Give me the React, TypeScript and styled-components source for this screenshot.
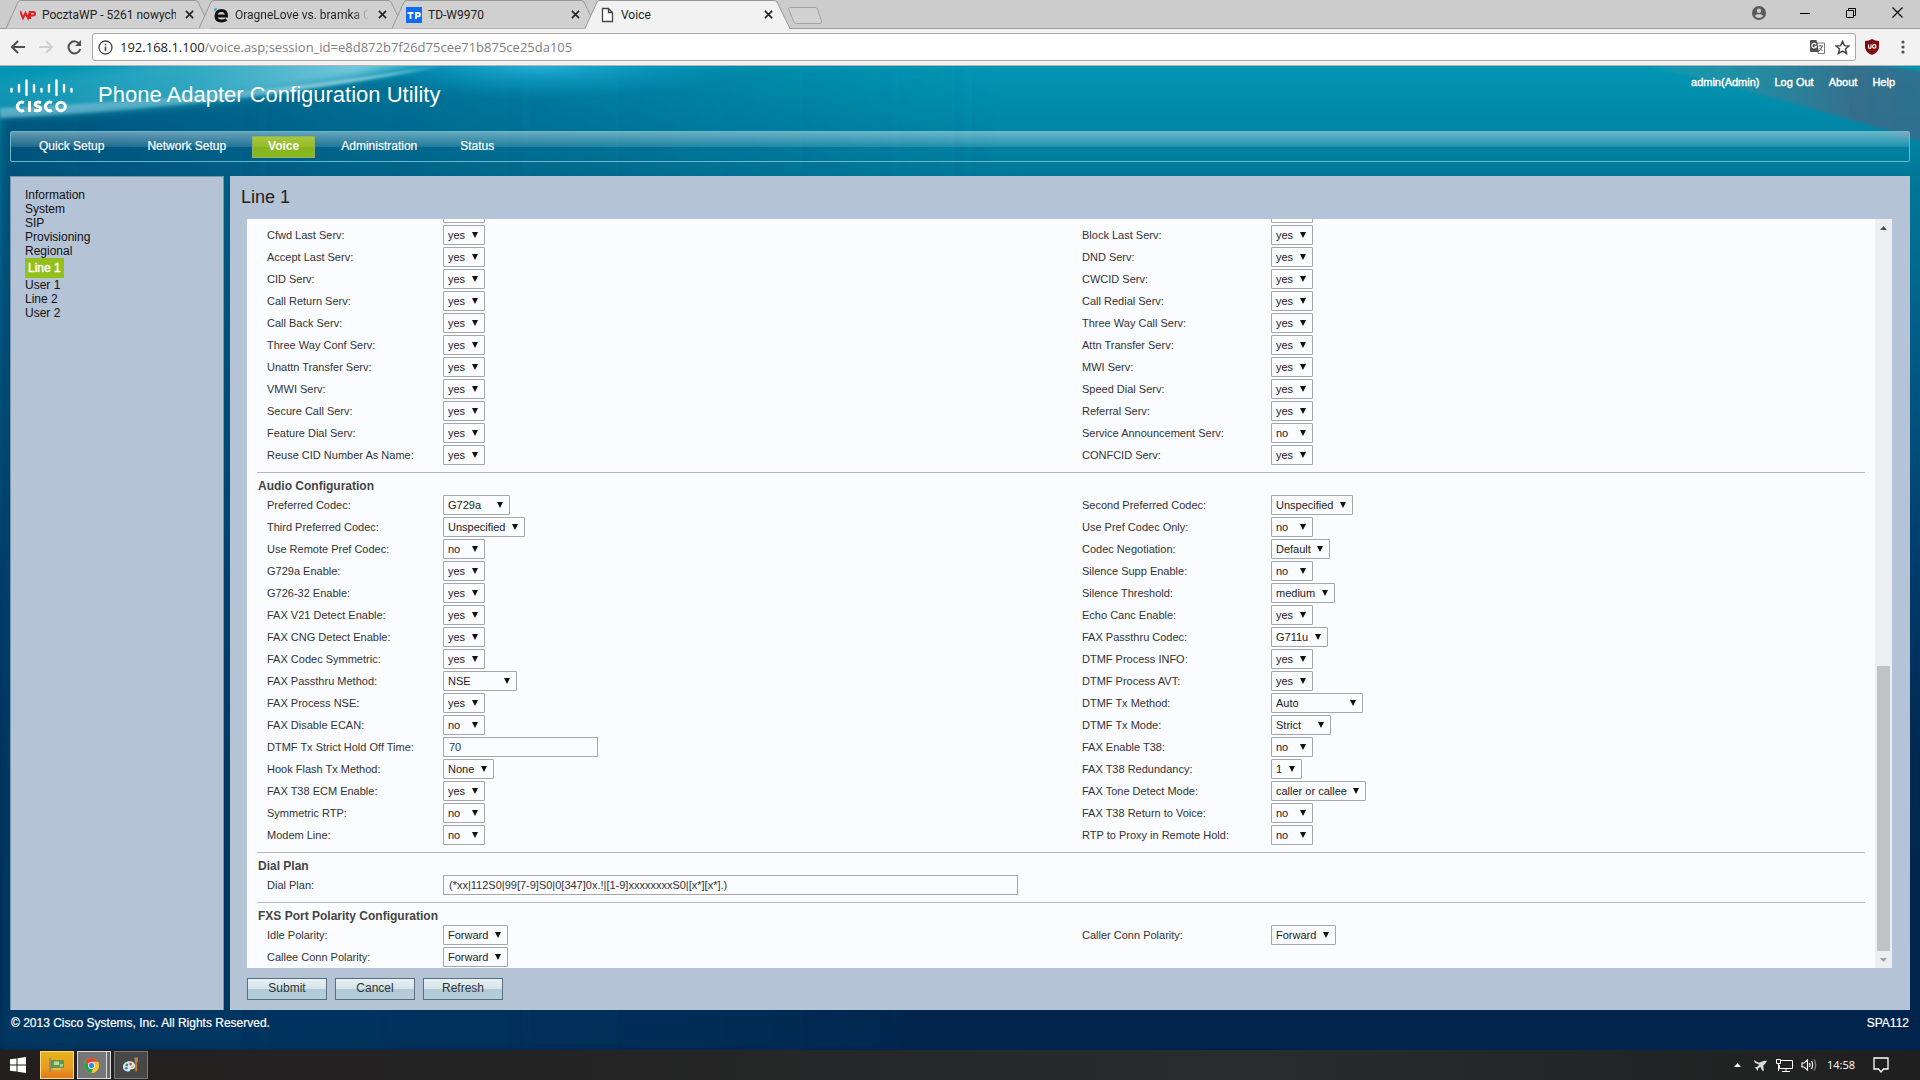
import React, { useId } from "react";
import styled, { createGlobalStyle, css } from "styled-components";

const arial = `"Liberation Sans", Arial, sans-serif`;
const segoe = `"Open Sans", "Noto Sans", sans-serif`;

const GlobalStyle = createGlobalStyle`
  *, *::before, *::after { box-sizing: border-box; }
  body { margin: 0; font-family: ${arial}; font-size: 12px; overflow: hidden; }
  button, input, select { font-family: inherit; margin: 0; }
  a { color: inherit; text-decoration: none; }
`;

const Screen = styled.div`
  display: flex;
  flex-direction: column;
  height: 100vh;
`;

/* ---------- Browser ---------- */
const TabStrip = styled.div`
  display: flex;
  height: 29px;
  padding-left: 6px;
  background: #cccccc;
  border-bottom: 1px solid #9d9d9f;
`;

const TabBox = styled.div<{ $active?: boolean }>`
  position: relative;
  display: flex;
  align-items: center;
  flex: 0 0 205px;
  width: 205px;
  min-width: 0;
  height: 29px;
  margin-right: -12px;
  padding: 0 17px 0 14px;
  z-index: ${(p) => (p.$active ? 2 : 1)};
`;

const TabShape = styled.svg`
  position: absolute;
  inset: 0;
  width: 100%;
  height: 100%;
  z-index: -1;
`;

const TabIcon = styled.span`
  display: flex;
  width: 16px;
  height: 16px;
  margin-right: 6px;
`;

const TabTitle = styled.span<{ $fade?: boolean }>`
  flex: 1;
  min-width: 0;
  margin-right: 8px;
  overflow: hidden;
  white-space: nowrap;
  font-family: Roboto, sans-serif;
  font-size: 12px;
  line-height: 16px;
  color: #222;
  ${(p) =>
    p.$fade &&
    css`
      color: transparent;
      background: linear-gradient(90deg, #222 88%, transparent 100%);
      background-clip: text;
      -webkit-background-clip: text;
    `}
`;

const IconButton = styled.button<{ $w?: number }>`
  display: flex;
  align-items: center;
  justify-content: center;
  flex: none;
  width: ${(p) => p.$w ?? 16}px;
  height: 16px;
  padding: 0;
  border: 0;
  background: none;
  color: #333;
`;

const NewTab = styled(IconButton)`
  width: 36px;
  height: 28px;
  margin-left: 9px;
`;

const WindowButtons = styled.div`
  display: flex;
  align-items: center;
  gap: 30px;
  margin-left: auto;
  padding: 0 15px 3px 0;
`;

const Toolbar = styled.div`
  display: flex;
  align-items: center;
  height: 37px;
  padding: 0 9px 0 9px;
  background: #f2f2f2;
  border-bottom: 1px solid #b4b4b4;
`;

const NavButtons = styled.div`
  display: flex;
  gap: 10px;
  margin-right: 9px;
`;

const Omnibox = styled.label`
  display: flex;
  align-items: center;
  flex: 1;
  height: 28px;
  padding: 0 5px;
  background: #fff;
  border: 1px solid #a8a8a8;
  border-radius: 3px;
  font-family: ${segoe};
`;

const UrlText = styled.span`
  flex: 1;
  padding-left: 7px;
  font-size: 13px;
  line-height: 20px;
  color: #808080;
`;

const UrlHost = styled.span`
  color: #222;
`;

const OmniIcons = styled.span`
  display: flex;
  gap: 10px;
`;

const Extensions = styled.div`
  display: flex;
  align-items: center;
  gap: 15px;
  margin-left: 8px;
`;

/* ---------- Cisco page ---------- */
const Page = styled.div`
  position: relative;
  isolation: isolate;
  display: flex;
  flex-direction: column;
  flex: 1;
  min-height: 0;
  padding: 0 10px;
  background: linear-gradient(180deg, #0097b4 0, #0086a6 60px, #007898 112px, #005f88 260px, #003a68 520px, #002850 700px, #00244c 100%);
`;

const Sky = styled.svg`
  position: absolute;
  inset: 0;
  width: 100%;
  height: 100%;
  z-index: -1;
`;

const Header = styled.header`
  display: flex;
  justify-content: space-between;
  height: 65px;
`;

const Brand = styled.div`
  display: flex;
  align-items: flex-start;
  gap: 25px;
  padding-top: 13px;
`;

const AppTitle = styled.h1`
  margin: 3px 0 0;
  font-size: 22px;
  line-height: 26px;
  font-weight: 400;
  color: #fff;
`;

const UserLinks = styled.nav`
  display: flex;
  gap: 15px;
  padding: 9px 15px 0 0;
  font-size: 11px;
  line-height: 14px;
  color: #fff;
  -webkit-text-stroke: 0.4px #fff;
`;

const MainNav = styled.nav`
  display: flex;
  align-items: center;
  flex: none;
  height: 31px;
  padding-left: 14px;
  border: 1px solid #69b9cc;
  border-radius: 2px;
  background: linear-gradient(180deg, rgba(255, 255, 255, 0.4) 0, rgba(255, 255, 255, 0.12) 15px, transparent 15px);
`;

const NavLink = styled.a<{ $active?: boolean }>`
  margin-right: 15px;
  padding: 0 13px 2px;
  font-size: 12px;
  line-height: 18px;
  color: #fff;
  border: 1px solid transparent;
  ${(p) =>
    p.$active
      ? css`
          margin: 0 12px 0 -3px;
          padding: 0 15px 2px;
          font-weight: 700;
          border-color: #8fb06a;
          background: linear-gradient(180deg, #a6c73c 0, #94bc2a 50%, #86b41c 50%, #8ab81f 100%);
        `
      : css`
          -webkit-text-stroke: 0.2px #fff;
        `}
`;

const Columns = styled.div`
  display: flex;
  gap: 6px;
  flex: 1;
  min-height: 0;
  margin-top: 14px;
`;

const Sidebar = styled.nav`
  flex: 0 0 214px;
  padding: 11px 14px;
  background: #b5c3d6;
  border: 1px solid #7896ae;
  border-bottom: 0;
`;

const SideList = styled.ul`
  margin: 0;
  padding: 0;
  list-style: none;
  font-size: 12px;
  line-height: 14px;
  color: #111;
`;

const SideLink = styled.a<{ $active?: boolean }>`
  display: table;
  ${(p) =>
    p.$active &&
    css`
      padding: 3px;
      color: #fff;
      background: #93c01a;
      -webkit-text-stroke: 0.4px #fff;
    `}
`;

const Main = styled.main`
  display: flex;
  flex-direction: column;
  flex: 1;
  min-width: 0;
  padding: 0 18px 10px 17px;
  background: #b5c3d6;
`;

const PageTitle = styled.h2`
  margin: 0 0 0 -6px;
  height: 43px;
  font-size: 18px;
  line-height: 42px;
  font-weight: 400;
  color: #222;
`;

const ScrollBox = styled.div`
  display: flex;
  flex: 1;
  min-height: 0;
  background: #fafcff;
`;

const Fields = styled.div`
  display: flex;
  flex-direction: column;
  justify-content: flex-end;
  flex: 1;
  min-width: 0;
  overflow: hidden;
  padding: 0 10px;
`;

const Section = styled.section`
  flex: none;
`;

const SectionTitle = styled.h3`
  margin: 6px 0 0;
  padding: 5px 1px 0;
  border-top: 1px solid #b4b6cc;
  font-size: 12px;
  line-height: 16px;
  font-weight: 700;
  color: #444;
`;

const Row = styled.div`
  display: grid;
  grid-template-columns: minmax(0, 815fr) minmax(0, 793fr);
  height: 22px;
`;

const FieldCell = styled.div<{ $labelWidth: number }>`
  display: grid;
  grid-template-columns: ${(p) => p.$labelWidth}px 1fr;
  align-items: center;
  justify-items: start;
  padding-left: 10px;
`;

const Label = styled.label`
  font-size: 11px;
  line-height: 14px;
  color: #333;
`;

const SelectWrap = styled.span<{ $w: number }>`
  position: relative;
  display: block;
  width: ${(p) => p.$w}px;
  height: 20px;
`;

const Select = styled.select`
  appearance: none;
  display: block;
  width: 100%;
  height: 20px;
  padding: 0 0 0 4px;
  border: 1px solid #a6a6a6;
  border-radius: 1px;
  background: #fafcff;
  font-size: 11px;
  line-height: 18px;
  color: #222;
`;

const Arrow = styled.svg`
  position: absolute;
  right: 7px;
  top: 7px;
  pointer-events: none;
`;

const TextInput = styled.input<{ $w: number }>`
  width: ${(p) => p.$w}px;
  height: 20px;
  padding: 0 5px;
  border: 1px solid #a6a6a6;
  background: #fafcff;
  font-size: 11px;
  color: #333;
`;

const ScrollTrack = styled.div`
  display: flex;
  flex-direction: column;
  flex: 0 0 17px;
  padding: 0 2px;
  background: #edeef1;
`;

const ScrollArrow = styled.button`
  display: flex;
  align-items: center;
  justify-content: center;
  flex: none;
  height: 17px;
  padding: 0;
  border: 0;
  background: none;
`;

const ScrollGap = styled.div`
  flex: 430;
`;

const ScrollThumb = styled.div`
  flex: 285;
  background: #c1c2c4;
`;

const Actions = styled.div`
  display: flex;
  gap: 8px;
  margin-top: 10px;
`;

const ActionButton = styled.button`
  width: 80px;
  height: 22px;
  padding: 0 0 2px;
  border: 1px solid #5b6d7d;
  font-size: 12px;
  line-height: 18px;
  color: #333;
  background: linear-gradient(180deg, #eaf2f5 0, #d3e2e9 48%, #b0cad6 52%, #b6ced9 100%);
`;

const Footer = styled.footer`
  display: flex;
  justify-content: space-between;
  flex: none;
  height: 40px;
  padding: 5px 1px 0 1px;
  font-size: 12px;
  line-height: 16px;
  color: #fff;
  -webkit-text-stroke: 0.2px #fff;
`;

/* ---------- Taskbar ---------- */
const Taskbar = styled.div`
  display: flex;
  align-items: center;
  flex: none;
  height: 30px;
  padding: 0 31px 0 10px;
  background: linear-gradient(90deg, #231f1f, #242424 30%, #292b2d 65%, #1f1f1f);
  color: #fff;
  font-family: ${segoe};
`;

const StartButton = styled(IconButton)`
  margin-right: 14px;
`;

const TaskButton = styled.button<{ $tone: "gold" | "light" | "dark" }>`
  display: flex;
  align-items: center;
  justify-content: center;
  width: 34px;
  height: 28px;
  margin-right: 3px;
  padding: 0;
  border: 1px solid;
  ${(p) =>
    p.$tone === "gold"
      ? css`
          border-color: #f7dd8a;
          background: linear-gradient(180deg, #e3b51c, #eb9a22 60%, #df7a1c);
        `
      : p.$tone === "light"
      ? css`
          border-color: #d8d8d8;
          background: linear-gradient(90deg, #777 28px, #ddd 28px, #ddd 29px, #6a6a6a 29px);
          padding-right: 5px;
        `
      : css`
          border-color: #7a7a7a;
          background: #474747;
        `}
`;

const Tray = styled.div`
  display: flex;
  align-items: center;
  gap: 8px;
  margin-left: auto;
`;

const Clock = styled.time`
  margin: 0 10px 0 2px;
  font-size: 11px;
  line-height: 16px;
`;

/* ---------- Pieces ---------- */
const Close = ({ label }: { label: string }) => (
  <IconButton $w={10} aria-label={label}>
    <svg width="9" height="9" viewBox="0 0 10 10" stroke="#222" strokeWidth="1.800">
      <path d="M1 1L9 9M9 1L1 9" />
    </svg>
  </IconButton>
);

const Tab = ({ title, icon, active, fade }: { title: string; icon: React.ReactNode; active?: boolean; fade?: boolean }) => (
  <TabBox $active={active}>
    <TabShape viewBox="0 0 205 29" preserveAspectRatio="none">
      <path d="M0 28.5L12 2Q13 .5 15 .5H189Q191 .5 192 2L205 28.5" fill={active ? "#f2f2f2" : "#d0d0d0"} stroke="#97979a" />
      {active && <path d="M1 28.5H204" stroke="#f2f2f2" strokeWidth="1.5" />}
    </TabShape>
    <TabIcon>{icon}</TabIcon>
    <TabTitle $fade={fade}>{title}</TabTitle>
    <Close label={`Close ${title}`} />
  </TabBox>
);

type Field = [label: string, value: string, width?: number, kind?: "text"];

const Control = ({ field, labelWidth }: { field?: Field; labelWidth: number }) => {
  const id = useId();
  if (!field) return <span />;
  const [label, value, width = 42, kind] = field;
  return (
    <FieldCell $labelWidth={labelWidth}>
      <Label htmlFor={id}>{label}</Label>
      {kind === "text" ? (
        <TextInput id={id} $w={width} defaultValue={value} />
      ) : (
        <SelectWrap $w={width}>
          <Select id={id} aria-label={label ? undefined : "Service"}>
            <option>{value}</option>
          </Select>
          <Arrow width="6" height="6" viewBox="0 0 6 6" fill="#111">
            <path d="M0 0H6L3 6Z" />
          </Arrow>
        </SelectWrap>
      )}
    </FieldCell>
  );
};

const Rows = ({ rows }: { rows: [Field, Field?][] }) => (
  <>
    {rows.map(([left, right], i) => (
      <Row key={i}>
        <Control field={left} labelWidth={176} />
        <Control field={right} labelWidth={189} />
      </Row>
    ))}
  </>
);

const services: [Field, Field?][] = [
  [["", "yes"], ["", "yes"]],
  [["Cfwd Last Serv:", "yes"], ["Block Last Serv:", "yes"]],
  [["Accept Last Serv:", "yes"], ["DND Serv:", "yes"]],
  [["CID Serv:", "yes"], ["CWCID Serv:", "yes"]],
  [["Call Return Serv:", "yes"], ["Call Redial Serv:", "yes"]],
  [["Call Back Serv:", "yes"], ["Three Way Call Serv:", "yes"]],
  [["Three Way Conf Serv:", "yes"], ["Attn Transfer Serv:", "yes"]],
  [["Unattn Transfer Serv:", "yes"], ["MWI Serv:", "yes"]],
  [["VMWI Serv:", "yes"], ["Speed Dial Serv:", "yes"]],
  [["Secure Call Serv:", "yes"], ["Referral Serv:", "yes"]],
  [["Feature Dial Serv:", "yes"], ["Service Announcement Serv:", "no"]],
  [["Reuse CID Number As Name:", "yes"], ["CONFCID Serv:", "yes"]],
];

const audio: [Field, Field?][] = [
  [["Preferred Codec:", "G729a", 67], ["Second Preferred Codec:", "Unspecified", 82]],
  [["Third Preferred Codec:", "Unspecified", 82], ["Use Pref Codec Only:", "no"]],
  [["Use Remote Pref Codec:", "no"], ["Codec Negotiation:", "Default", 59]],
  [["G729a Enable:", "yes"], ["Silence Supp Enable:", "no"]],
  [["G726-32 Enable:", "yes"], ["Silence Threshold:", "medium", 64]],
  [["FAX V21 Detect Enable:", "yes"], ["Echo Canc Enable:", "yes"]],
  [["FAX CNG Detect Enable:", "yes"], ["FAX Passthru Codec:", "G711u", 57]],
  [["FAX Codec Symmetric:", "yes"], ["DTMF Process INFO:", "yes"]],
  [["FAX Passthru Method:", "NSE", 74], ["DTMF Process AVT:", "yes"]],
  [["FAX Process NSE:", "yes"], ["DTMF Tx Method:", "Auto", 92]],
  [["FAX Disable ECAN:", "no"], ["DTMF Tx Mode:", "Strict", 60]],
  [["DTMF Tx Strict Hold Off Time:", "70", 155, "text"], ["FAX Enable T38:", "no"]],
  [["Hook Flash Tx Method:", "None", 51], ["FAX T38 Redundancy:", "1", 31]],
  [["FAX T38 ECM Enable:", "yes"], ["FAX Tone Detect Mode:", "caller or callee", 95]],
  [["Symmetric RTP:", "no"], ["FAX T38 Return to Voice:", "no"]],
  [["Modem Line:", "no"], ["RTP to Proxy in Remote Hold:", "no"]],
];

const dialPlan: [Field, Field?][] = [
  [["Dial Plan:", "(*xx|112S0|99[7-9]S0|0[347]0x.!|[1-9]xxxxxxxxS0|[x*][x*].)", 575, "text"]],
];

const polarity: [Field, Field?][] = [
  [["Idle Polarity:", "Forward", 65], ["Caller Conn Polarity:", "Forward", 65]],
  [["Callee Conn Polarity:", "Forward", 65]],
];

const CiscoLogo = () => (
  <svg width="63" height="35" viewBox="0 0 63 35" role="img" aria-label="Cisco">
    <g stroke="#fff" strokeWidth="2.400" strokeLinecap="round">
      <path d="M1.500 10V12.500M9 6V12.500M16.500 1.500V16M24 6V12.500M31.500 10V12.500M39 6V12.500M46.500 1.500V16M54 6V12.500M61.500 10V12.500" />
    </g>
    <g fill="none" stroke="#fff" strokeWidth="3">
      <path d="M14 23.800A4.300 4.300 0 1 0 14 31.200" />
      <path d="M19.500 22V33" />
      <path d="M31 23.500C27 22.500 25 23.500 25 25C25 28 30.500 26.500 30.500 29.800C30.500 32 27 32 24 31.300" />
      <path d="M42 23.800A4.300 4.300 0 1 0 42 31.200" />
      <circle cx="51" cy="27.500" r="4.300" />
    </g>
  </svg>
);

export default function App() {
  return (
    <Screen>
      <GlobalStyle />
      <TabStrip>
        <Tab
          title="PocztaWP - 5261 nowych"
          icon={
            <svg width="16" height="16" viewBox="0 0 16 16" fill="none" stroke="#dd2027" strokeWidth="2">
              <path d="M0 4L3 11L5.500 6L8 11L10 4M10 12V5H13.500Q15 5 15 6.800Q15 8.500 13 8.500H11" />
            </svg>
          }
        />
        <Tab
          title="OragneLove vs. bramka Orange"
          fade
          icon={
            <svg width="16" height="16" viewBox="0 0 16 16" fill="none" stroke="#111" strokeWidth="3">
              <path d="M3 9H13.500C13.500 5.500 11.500 3.500 8.500 3.500C5 3.500 3 6 3 9C3 12.500 5.500 14 8.500 14C10.500 14 12 13.500 13.500 12.500" />
              <path d="M1 2L3 4M3 1V3" stroke="#39a0d8" strokeWidth="1.500" />
            </svg>
          }
        />
        <Tab
          title="TD-W9970"
          icon={
            <svg width="16" height="16" viewBox="0 0 16 16">
              <rect width="16" height="16" fill="#0f6cf0" />
              <path d="M1.500 6H7.500M4.500 6V12M10 12V6H12.500Q14 6 14 7.700Q14 9.300 12.500 9.300H10" fill="none" stroke="#fff" strokeWidth="1.800" />
            </svg>
          }
        />
        <Tab
          title="Voice"
          active
          icon={
            <svg width="16" height="16" viewBox="0 0 16 16" fill="#fff" stroke="#444" strokeWidth="1.300">
              <path d="M3.500 1.500H9.500L13.500 5.500V14.500H3.500ZM9.500 1.500V5.500H13.500" />
            </svg>
          }
        />
        <NewTab aria-label="New tab">
          <svg width="36" height="28" viewBox="0 0 36 28">
            <path d="M3.500 7.500H28Q29.500 7.500 30.500 9L34.500 21Q35 23.500 33 23.500H9.500Q8 23.500 7 22L1.500 9Q1.500 7.500 3.500 7.500Z" fill="#d2d2d2" stroke="#a2a2a4" />
          </svg>
        </NewTab>
        <WindowButtons>
          <IconButton aria-label="Profile">
            <svg width="14" height="14" viewBox="0 0 14 14">
              <circle cx="7" cy="7" r="7" fill="#5a5a5a" />
              <circle cx="7" cy="4.800" r="2.200" fill="#ccc" />
              <path d="M2.800 10Q4 8 7 8T11.200 10Q9.500 12 7 12T2.800 10" fill="#ccc" />
            </svg>
          </IconButton>
          <IconButton aria-label="Minimize">
            <svg width="10" height="10" viewBox="0 0 10 10"><path d="M0 5.500H10" stroke="#000" /></svg>
          </IconButton>
          <IconButton aria-label="Restore">
            <svg width="10" height="10" viewBox="0 0 10 10" fill="none" stroke="#000"><path d="M.5 2.500H7.500V9.500H.5ZM2.500 2.500V.5H9.500V7.500H7.500" /></svg>
          </IconButton>
          <IconButton aria-label="Close window">
            <svg width="11" height="11" viewBox="0 0 11 11" stroke="#000" strokeWidth="1.200"><path d="M.5 .5L10.500 10.500M10.500 .5L.5 10.500" /></svg>
          </IconButton>
        </WindowButtons>
      </TabStrip>
      <Toolbar>
        <NavButtons>
          <IconButton $w={18} aria-label="Back">
            <svg width="16" height="14" viewBox="0 0 16 14" fill="none" stroke="#505050" strokeWidth="2"><path d="M15 7H2M8 1L2 7L8 13" /></svg>
          </IconButton>
          <IconButton $w={18} aria-label="Forward">
            <svg width="16" height="14" viewBox="0 0 16 14" fill="none" stroke="#d0d0d0" strokeWidth="2"><path d="M1 7H14M8 1L14 7L8 13" /></svg>
          </IconButton>
          <IconButton $w={18} aria-label="Reload">
            <svg width="15" height="15" viewBox="0 0 15 15" fill="none" stroke="#505050" strokeWidth="2"><path d="M12.500 4A6 6 0 1 0 13.300 9" /><path d="M14 0V6H8Z" fill="#505050" stroke="none" /></svg>
          </IconButton>
        </NavButtons>
        <Omnibox>
          <svg width="15" height="15" viewBox="0 0 15 15" fill="none" stroke="#444"><circle cx="7.500" cy="7.500" r="6.500" strokeWidth="1.300" /><path d="M7.500 6.500V11M7.500 3.700V5.300" strokeWidth="1.600" /></svg>
          <UrlText><UrlHost>192.168.1.100</UrlHost>/voice.asp;session_id=e8d872b7f26d75cee71b875ce25da105</UrlText>
          <OmniIcons>
            <svg width="15" height="15" viewBox="0 0 15 15">
              <path d="M7 3H14.500V13.500H8Z" fill="#fff" stroke="#777" />
              <path d="M8.500 6H13M10.700 5V6M12 6Q11 9.500 9 11M9.500 8L12.500 11" fill="none" stroke="#666" />
              <path d="M1 0H6.500L9 12H1Q0 12 0 11V1Q0 0 1 0Z" fill="#505050" />
              <path d="M6 4.300A2.300 2.300 0 1 0 6.400 6.300H4.500" fill="none" stroke="#fff" strokeWidth="1.200" />
            </svg>
            <svg width="15" height="15" viewBox="0 0 16 16" fill="none" stroke="#444" strokeWidth="1.600"><path d="M8 1.500L10 6L14.800 6.400L11.200 9.600L12.300 14.300L8 11.800L3.700 14.300L4.800 9.600L1.200 6.400L6 6Z" /></svg>
          </OmniIcons>
        </Omnibox>
        <Extensions>
          <IconButton aria-label="uBlock">
            <svg width="14" height="16" viewBox="0 0 14 16"><path d="M7 0Q10 2 14 2V8Q14 13 7 16Q0 13 0 8V2Q4 2 7 0Z" fill="#800b0e" /><path d="M3.500 5.500V8Q3.500 9.300 4.800 9.300T6 8V5.500" fill="none" stroke="#fff" strokeWidth="1.200" /><circle cx="9.300" cy="7.400" r="1.700" fill="none" stroke="#fff" strokeWidth="1.200" /></svg>
          </IconButton>
          <IconButton aria-label="Menu">
            <svg width="4" height="14" viewBox="0 0 4 14" fill="#505050"><circle cx="2" cy="2" r="1.600" /><circle cx="2" cy="7" r="1.600" /><circle cx="2" cy="12" r="1.600" /></svg>
          </IconButton>
        </Extensions>
      </Toolbar>

      <Page>
        <Sky viewBox="0 0 1920 984" preserveAspectRatio="none" aria-hidden="true">
          <defs>
            <linearGradient id="deep" x1="0" y1="0" x2="1" y2="0">
              <stop offset="0" stopColor="#003f6c" stopOpacity=".7" />
              <stop offset="1" stopColor="#004f7c" stopOpacity="0" />
            </linearGradient>
            <linearGradient id="wedge" x1="0" y1="0" x2="1" y2="0">
              <stop offset="0" stopColor="#7cc4dc" stopOpacity=".1" />
              <stop offset=".45" stopColor="#8accdf" stopOpacity=".35" />
              <stop offset=".8" stopColor="#b4e2f0" stopOpacity=".65" />
              <stop offset="1" stopColor="#a0dcee" stopOpacity=".4" />
            </linearGradient>
            <linearGradient id="streak" x1="0" y1="0" x2="1" y2="0">
              <stop offset="0" stopColor="#a8d8e8" stopOpacity=".5" />
              <stop offset=".5" stopColor="#a8d8e8" stopOpacity=".35" />
              <stop offset="1" stopColor="#f0fbff" stopOpacity=".95" />
            </linearGradient>
            <radialGradient id="cyan">
              <stop offset="0" stopColor="#30b8e0" stopOpacity=".8" />
              <stop offset="1" stopColor="#00a0cc" stopOpacity="0" />
            </radialGradient>
            <linearGradient id="dusk" x1="0" y1="0" x2="1" y2="0">
              <stop offset="0" stopColor="#3fa4b0" stopOpacity=".1" />
              <stop offset=".3" stopColor="#3a90a0" stopOpacity=".5" />
              <stop offset=".75" stopColor="#3d6a86" stopOpacity=".85" />
              <stop offset="1" stopColor="#336b8b" stopOpacity=".85" />
            </linearGradient>
            <filter id="soft"><feGaussianBlur stdDeviation="5" /></filter>
            <filter id="fine"><feGaussianBlur stdDeviation="1.500" /></filter>
          </defs>
          <path d="M0 50Q220 44 440 0H1000L900 984H0Z" fill="url(#deep)" filter="url(#soft)" />
          <ellipse cx="540" cy="0" rx="200" ry="34" fill="url(#cyan)" />
          <path d="M-20 50Q230 44 450 -10H180Q80 10 -20 14Z" fill="url(#wedge)" filter="url(#soft)" />
          <path d="M0 52Q240 40 440 0Q260 30 0 42Z" fill="url(#streak)" filter="url(#fine)" />
          <path d="M1620 -6Q1780 30 1930 78V6Q1860 -4 1800 -6Z" fill="url(#dusk)" filter="url(#fine)" />
        </Sky>
        <Header>
          <Brand>
            <CiscoLogo />
            <AppTitle>Phone Adapter Configuration Utility</AppTitle>
          </Brand>
          <UserLinks>
            <span>admin(Admin)</span>
            <a href="#logout">Log Out</a>
            <a href="#about">About</a>
            <a href="#help">Help</a>
          </UserLinks>
        </Header>
        <MainNav>
          <NavLink href="#quick">Quick Setup</NavLink>
          <NavLink href="#network">Network Setup</NavLink>
          <NavLink href="#voice" $active>Voice</NavLink>
          <NavLink href="#admin">Administration</NavLink>
          <NavLink href="#status">Status</NavLink>
        </MainNav>
        <Columns>
          <Sidebar>
            <SideList>
              {["Information", "System", "SIP", "Provisioning", "Regional", "Line 1", "User 1", "Line 2", "User 2"].map((name) => (
                <li key={name}>
                  <SideLink href={`#${name}`} $active={name === "Line 1"}>{name}</SideLink>
                </li>
              ))}
            </SideList>
          </Sidebar>
          <Main>
            <PageTitle>Line 1</PageTitle>
            <ScrollBox>
              <Fields>
                <Section><Rows rows={services} /></Section>
                <Section><SectionTitle>Audio Configuration</SectionTitle><Rows rows={audio} /></Section>
                <Section><SectionTitle>Dial Plan</SectionTitle><Rows rows={dialPlan} /></Section>
                <Section><SectionTitle>FXS Port Polarity Configuration</SectionTitle><Rows rows={polarity} /></Section>
              </Fields>
              <ScrollTrack>
                <ScrollArrow aria-label="Scroll up"><svg width="7" height="4" viewBox="0 0 7 4" fill="#505050"><path d="M0 4L3.500 0L7 4Z" /></svg></ScrollArrow>
                <ScrollGap />
                <ScrollThumb />
                <ScrollArrow aria-label="Scroll down"><svg width="7" height="4" viewBox="0 0 7 4" fill="#a0a0a0"><path d="M0 0L3.500 4L7 0Z" /></svg></ScrollArrow>
              </ScrollTrack>
            </ScrollBox>
            <Actions>
              <ActionButton>Submit</ActionButton>
              <ActionButton>Cancel</ActionButton>
              <ActionButton>Refresh</ActionButton>
            </Actions>
          </Main>
        </Columns>
        <Footer>
          <span>© 2013 Cisco Systems, Inc. All Rights Reserved.</span>
          <span>SPA112</span>
        </Footer>
      </Page>

      <Taskbar>
        <StartButton aria-label="Start">
          <svg width="16" height="16" viewBox="0 0 16 16" fill="#fff"><path d="M0 2.300L6.500 1.400V7.500H0ZM7.500 1.200L16 0V7.500H7.500ZM0 8.500H6.500V14.600L0 13.700ZM7.500 8.500H16V16L7.500 14.800Z" /></svg>
        </StartButton>
        <TaskButton $tone="gold" aria-label="Network card">
          <svg width="16" height="14" viewBox="0 0 16 14"><path d="M1 0V14" stroke="#7c8a7c" strokeWidth="1.500" /><rect x="2" y="2" width="13" height="8" fill="#5c9c44" /><rect x="5" y="3.500" width="5" height="3.500" fill="#c3d4a8" /><rect x="11" y="6" width="3" height="3" fill="#a8c4a0" /><path d="M4 11H12" stroke="#d8c860" strokeWidth="1.500" /></svg>
        </TaskButton>
        <TaskButton $tone="light" aria-label="Chrome">
          <svg width="15" height="15" viewBox="0 0 16 16"><circle cx="8" cy="8" r="8" fill="#f5c827" /><path d="M8 8L1.100 4A8 8 0 0 1 14.900 4Z" fill="#dc4536" /><path d="M1.100 4A8 8 0 0 0 8 16L11 9.500L8 8Z" fill="#2e9c55" /><path d="M14.900 4H8V8L10.500 10L8 16A8 8 0 0 0 14.900 4Z" fill="#f5c827" /><circle cx="8" cy="8" r="3.700" fill="#fff" /><circle cx="8" cy="8" r="2.900" fill="#4a86e0" /></svg>
        </TaskButton>
        <TaskButton $tone="dark" aria-label="Paint">
          <svg width="16" height="16" viewBox="0 0 17 16"><path d="M7 4C3 4 0 6.500 0 10C0 13 3 15 6 15C8 15 7 12.500 9 12.500C11 12.500 13 12 13 9C13 6 10.500 4 7 4Z" fill="#d7e8f4" /><circle cx="4" cy="8" r="1.500" fill="#3e9c48" /><circle cx="8" cy="7" r="1.500" fill="#cf4a38" /><circle cx="3.500" cy="11.500" r="1.400" fill="#3878c8" /><circle cx="10" cy="10" r="1.300" fill="#e0b030" /><path d="M14 15V5" stroke="#c87830" strokeWidth="2" /><path d="M12 0H16L15.500 5H12.500Z" fill="#b8864a" /></svg>
        </TaskButton>
        <Tray>
          <IconButton $w={14} aria-label="Show hidden icons"><svg width="7" height="4" viewBox="0 0 7 4" fill="#fff"><path d="M0 4L3.500 0L7 4Z" /></svg></IconButton>
          <svg width="15" height="15" viewBox="0 0 16 16" fill="#dcdcdc"><path d="M1 2L6 5L12 3L15 3L13 6L11 8L11.500 14L9.500 13L8 9.500L5.500 11L5 14L3.500 11.500L1.500 10.500L5 9L6.500 7L2 5Z" /></svg>
          <svg width="17" height="15" viewBox="0 0 17 15" fill="none" stroke="#fff"><path d="M5 2.500H16.500V10.500H3.500V7M10 10.500V13.500M6 13.500H14M.5 1.500H4.500V5.500H.5ZM2.500 5.500V13" /></svg>
          <svg width="16" height="14" viewBox="0 0 16 14" fill="none" stroke="#fff" strokeWidth="1.200"><path d="M1 5H3L6.500 2V12L3 9H1Z" /><path d="M8.500 5Q9.700 7 8.500 9M10.500 3Q12.800 7 10.500 11" /><path d="M13 1.500Q16.500 7 13 12.500" stroke="#888" /></svg>
          <Clock>14:58</Clock>
          <IconButton aria-label="Notifications"><svg width="16" height="16" viewBox="0 0 16 16" fill="none" stroke="#fff" strokeWidth="1.300"><path d="M1 1H15V12H10.500L8 15L5.500 12H1Z" /></svg></IconButton>
        </Tray>
      </Taskbar>
    </Screen>
  );
}
